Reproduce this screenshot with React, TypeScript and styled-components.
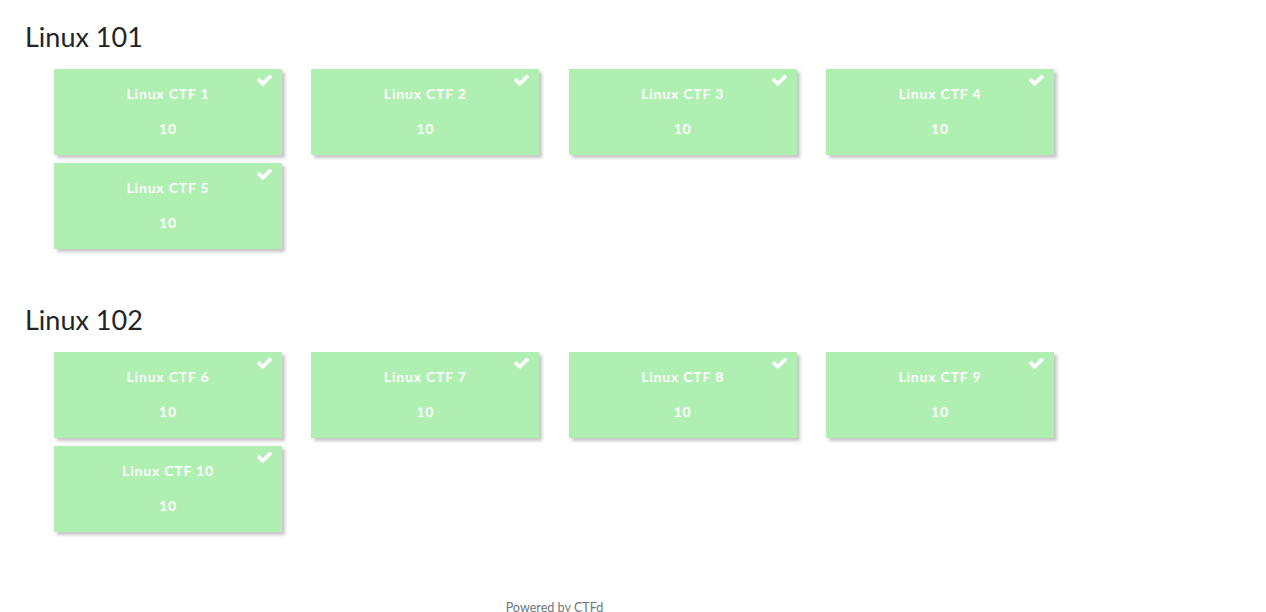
import React from "react";
import styled, { createGlobalStyle } from "styled-components";

const Global = createGlobalStyle`
  html, body { margin: 0; padding: 0; background: #ffffff; }
  body { font-family: Lato, "Open Sans", sans-serif; overflow: hidden; }
`;

const Page = styled.div`
  display: flex;
  flex-direction: column;
  padding: 20px 0 0 25px;
  height: 612px;
  box-sizing: border-box;
`;

const Section = styled.section`
  display: flex;
  flex-direction: column;
  margin-bottom: 54px;
`;

const CategoryTitle = styled.h2`
  margin: 0;
  font-size: 27px;
  font-weight: 400;
  line-height: 34px;
  color: #212529;
`;

const Grid = styled.div`
  display: grid;
  grid-template-columns: repeat(4, 228px);
  column-gap: 29.3px;
  row-gap: 8px;
  margin: 15px 0 0 29px;
`;

const Card = styled.button`
  position: relative;
  width: 228px;
  height: 86px;
  border: none;
  padding: 0;
  background: #afefb2;
  box-shadow: 3px 3px 3px rgba(128, 128, 128, 0.45);
  display: flex;
  flex-direction: column;
  align-items: center;
  color: #ffffff;
  font-family: Lato, "Open Sans", sans-serif;
  font-weight: 700;
  cursor: pointer;
`;

const CardName = styled.p`
  margin: 16px 0 0;
  font-size: 14px;
  line-height: 18px;
  letter-spacing: 0.8px;
`;

const CardValue = styled.span`
  margin-top: 17px;
  font-size: 14px;
  line-height: 18px;
  letter-spacing: 0.8px;
`;

const Check = styled.svg`
  position: absolute;
  top: 6px;
  right: 10px;
  width: 15px;
  height: 11px;
  fill: #ffffff;
`;

const Footer = styled.footer`
  width: 1059px;
  text-align: center;
  margin-top: auto;
  font-size: 12.6px;
  line-height: 16px;
  color: #6c757d;
  transform: translateY(4px);
`;

const CheckIcon = () => (
  <Check viewBox="121 402 1550 1092" aria-hidden>
    <path d="M1671 566q0 40-28 68l-724 724-136 136q-28 28-68 28t-68-28l-136-136-362-362q-28-28-28-68t28-68l136-136q28-28 68-28t68 28l294 295 656-657q28-28 68-28t68 28l136 136q28 28 28 68z" />
  </Check>
);

const categories = [
  { name: "Linux 101", challenges: [1, 2, 3, 4, 5] },
  { name: "Linux 102", challenges: [6, 7, 8, 9, 10] },
];

export default function App() {
  return (
    <>
      <Global />
      <Page>
        {categories.map((cat) => (
          <Section key={cat.name}>
            <CategoryTitle>{cat.name}</CategoryTitle>
            <Grid>
              {cat.challenges.map((n) => (
                <Card key={n}>
                  <CheckIcon />
                  <CardName>Linux CTF {n}</CardName>
                  <CardValue>10</CardValue>
                </Card>
              ))}
            </Grid>
          </Section>
        ))}
        <Footer>Powered by CTFd</Footer>
      </Page>
    </>
  );
}
